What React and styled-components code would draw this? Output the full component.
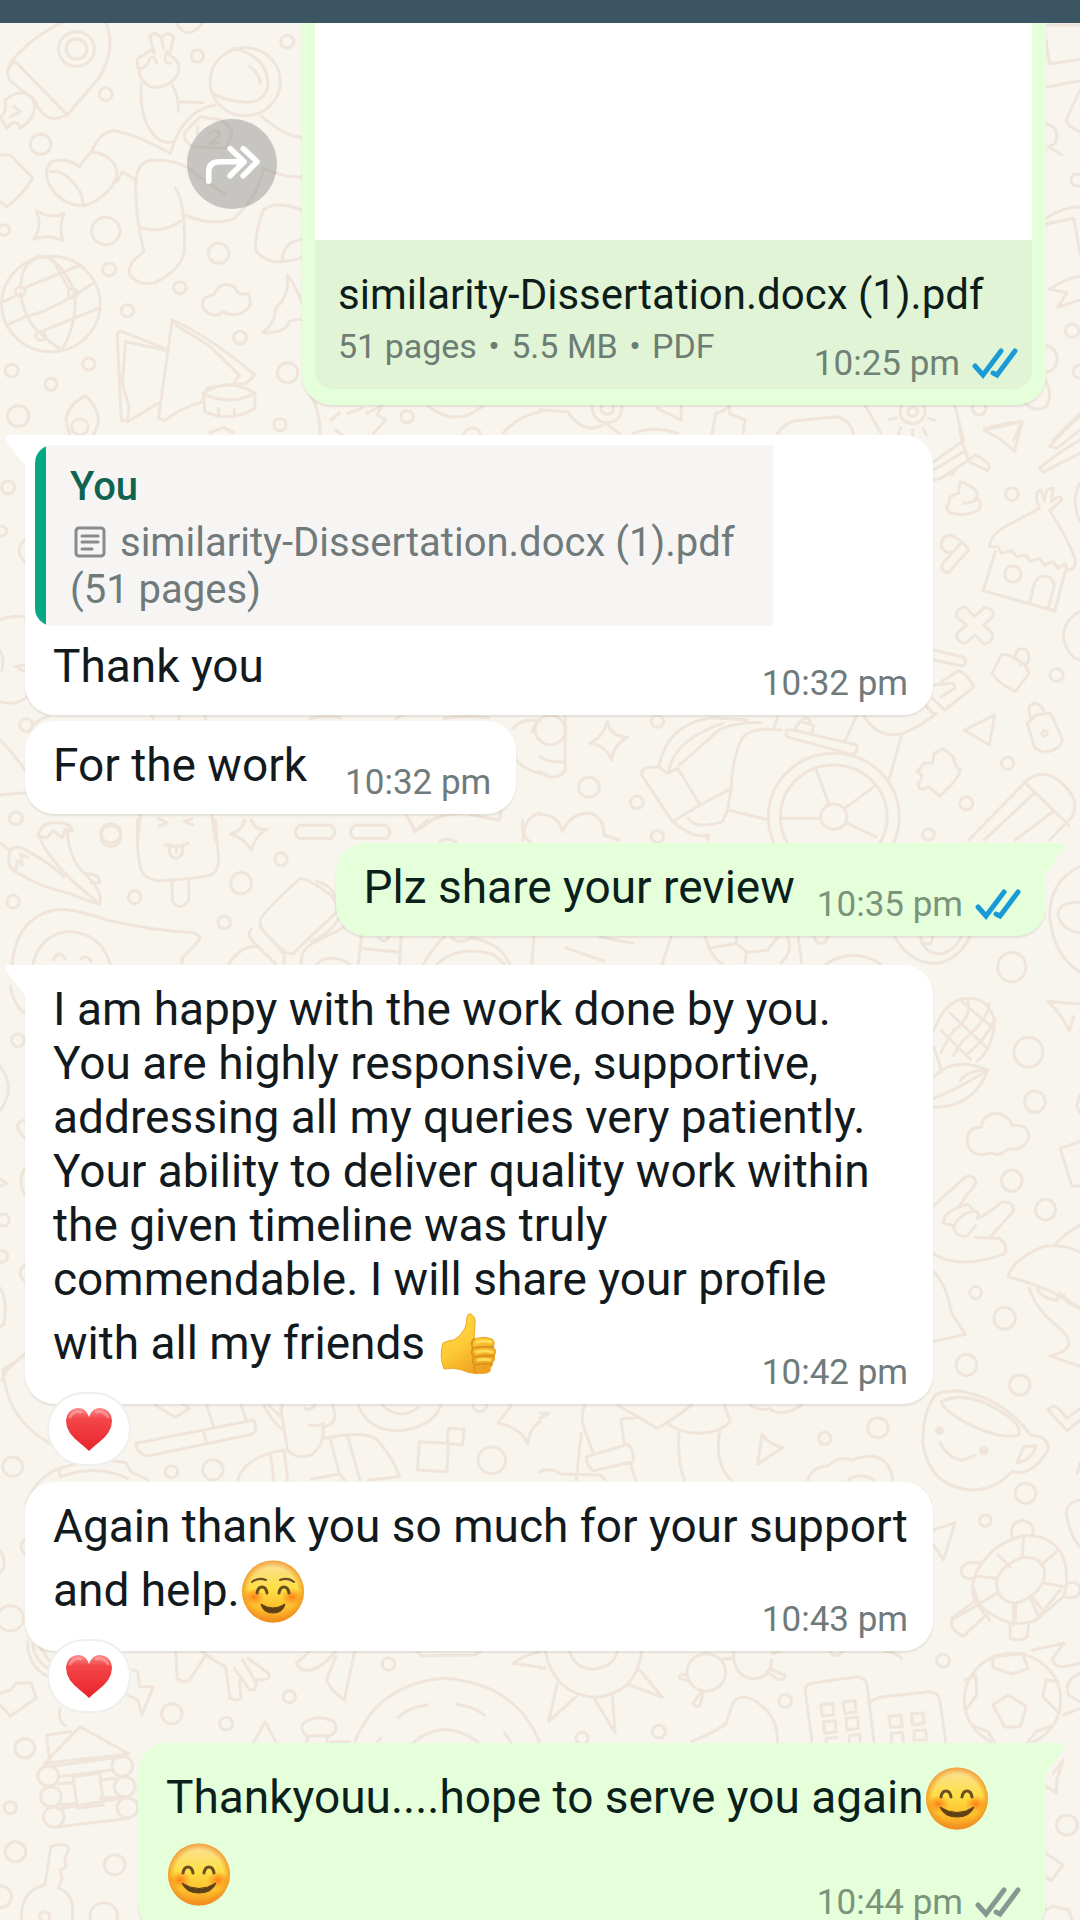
import React from "react";
import styled, { createGlobalStyle, css } from "styled-components";

const GlobalStyle = createGlobalStyle`
  *, *::before, *::after { box-sizing: border-box; }
  html, body { margin: 0; padding: 0; }
  body {
    background: #f8f5ee;
    font-family: Roboto, "Noto Sans", sans-serif;
    height: 100vh;
    overflow: hidden;
  }
`;

/* ---------- layout ---------- */

const Screen = styled.div`
  display: flex;
  flex-direction: column;
  height: 100vh;
  overflow: hidden;
`;

const StatusBar = styled.header`
  flex: none;
  height: 23px;
  background: #3b5662;
`;

const Chat = styled.main`
  position: relative;
  flex: 1;
  min-height: 0;
  overflow: hidden;
  background: #f8f5ee;
`;

const Wallpaper = styled.svg`
  position: absolute;
  inset: 0;
  width: 100%;
  height: 100%;
  fill: none;
  stroke: #efe5da;
  stroke-width: 3;
  stroke-linecap: round;
  stroke-linejoin: round;

  path, circle, rect { vector-effect: non-scaling-stroke; }
`;

const Thread = styled.ol`
  position: relative;
  display: flex;
  flex-direction: column;
  margin: 0;
  padding: 0 34px 0 25px;
  list-style: none;
`;

const Row = styled.li`
  display: flex;
  flex-direction: column;
  align-items: ${(p) => (p.$out ? "flex-end" : "flex-start")};
  margin-top: ${(p) => p.$gap || 0}px;
`;

const Forwardable = styled.div`
  display: flex;
  gap: 25px;
`;

/* ---------- bubbles ---------- */

const incomingTail = css`
  border-top-left-radius: 0;
  &::before {
    content: "";
    position: absolute;
    top: 0;
    left: -20px;
    width: 21px;
    height: 32px;
    background: inherit;
    clip-path: path("M21 0 H4 Q-2 1 2 7 L21 32 Z");
  }
`;

const outgoingTail = css`
  border-top-right-radius: 0;
  &::before {
    content: "";
    position: absolute;
    top: 0;
    right: -20px;
    width: 21px;
    height: 32px;
    background: inherit;
    clip-path: path("M0 0 H17 Q23 1 19 6 L0 32 Z");
  }
`;

const Bubble = styled.article`
  position: relative;
  width: ${(p) => (p.$wide ? "min(908px, 100%)" : "auto")};
  max-width: 100%;
  border-radius: 30px;
  background: ${(p) => (p.$out ? "#e5ffdb" : "#ffffff")};
  box-shadow: 0 2px 2px rgba(60, 50, 40, 0.1);
  ${(p) => p.$tail && (p.$out ? outgoingTail : incomingTail)}
`;

const Content = styled.div`
  display: ${(p) => (p.$inline ? "flex" : "grid")};
  gap: ${(p) => p.$gap || 0}px;
  padding: ${(p) => (p.$afterQuote ? 13 : 17)}px 22px 11px 28px;
`;

const Text = styled.p`
  grid-area: 1 / 1;
  margin: 0 0 11px;
  color: ${(p) => (p.$out ? "#0b1f1b" : "#121a1d")};
  font-size: 46px;
  line-height: 54px;
`;

const Meta = styled.div`
  grid-area: 1 / 1;
  align-self: end;
  justify-self: end;
  display: flex;
  align-items: center;
  gap: 12px;
  margin-right: 3px;
  color: ${(p) => (p.$out ? "#7a937b" : "#6f7a7b")};
  font-size: 35px;
  line-height: 40px;
  white-space: nowrap;
`;

const TickIcon = styled.svg`
  width: 46px;
  height: 32px;
  fill: none;
  stroke: ${(p) => (p.$read ? "#189bd6" : "#879892")};
  stroke-width: 5;
  stroke-linecap: round;
`;

/* ---------- document message ---------- */

const DocBubble = styled(Bubble)`
  width: 744px;
  padding: 0 14px 16px 13px;
  border-radius: 0 0 30px 30px;
`;

const Preview = styled.div`
  height: 217px;
  background: #ffffff;
`;

const DocFooter = styled.div`
  display: grid;
  padding: 30px 11px 5px 23px;
  border-radius: 0 0 18px 18px;
  background: #e1f5d6;

  ${Meta} { color: #6f8275; }
`;

const DocInfo = styled.div`
  grid-area: 1 / 1;
  padding-bottom: 16px;
`;

const DocTitle = styled.h2`
  margin: 0;
  color: #0d1d19;
  font-size: 42px;
  font-weight: 400;
  line-height: 50px;
`;

const DocFacts = styled.p`
  margin: 4px 0 0;
  color: #6c7d74;
  font-size: 34px;
  line-height: 44px;
`;

const Bullet = styled.span`
  margin: 0 3px;
`;

const ForwardButton = styled.button`
  display: grid;
  place-items: center;
  width: 90px;
  height: 90px;
  margin-top: 96px;
  padding: 0;
  border: 0;
  border-radius: 50%;
  background: rgba(130, 130, 130, 0.42);

  svg {
    width: 56px;
    height: 41px;
    fill: none;
    stroke: #ffffff;
    stroke-width: 6;
    stroke-linecap: round;
    stroke-linejoin: round;
  }
`;

/* ---------- quote ---------- */

const QuoteWrap = styled.div`
  padding: 10px 10px 0;
`;

const Quote = styled.blockquote`
  width: 738px;
  max-width: 100%;
  margin: 0;
  padding: 12px 24px 13px 35px;
  border-radius: 18px 0 0 18px;
  background: linear-gradient(to right, #05a884 11px, #f6f5f4 11px);
  color: #707a7b;
  font-size: 40px;
  line-height: 47px;
`;

const QuoteName = styled.strong`
  display: block;
  margin-bottom: 2px;
  color: #0f6350;
  font-size: 40px;
  font-weight: 500;
  line-height: 60px;
`;

const QuoteText = styled.p`
  margin: 0;
`;

const PageIcon = styled.svg`
  width: 32px;
  height: 32px;
  margin: 0 14px 0 4px;
  vertical-align: -2px;
  fill: none;
  stroke: #8b8b8b;
  stroke-width: 3;
  stroke-linecap: round;
`;

/* ---------- reactions and emoji ---------- */

const Reaction = styled.button`
  position: relative;
  display: grid;
  place-items: center;
  width: 84px;
  height: 74px;
  margin: -12px 0 0 22px;
  padding: 0;
  border: 2px solid #efefee;
  border-radius: 37px;
  background: #ffffff;

  svg {
    width: 48px;
    height: 45px;
  }
`;

const EmojiIcon = styled.svg`
  width: 64px;
  height: 76px;
  margin: 0 1px;
  vertical-align: -23px;
`;

/* ---------- drawings ---------- */

const GradientStore = styled.svg`
  display: block;
  width: 0;
  height: 0;
`;

function EmojiDefs() {
  return (
    <GradientStore aria-hidden="true">
      <defs>
        <linearGradient id="face" x1="0" y1="0" x2="0" y2="1">
          <stop offset="0" stopColor="#fbdf9d" />
          <stop offset="0.45" stopColor="#fde045" />
          <stop offset="0.75" stopColor="#fdc02d" />
          <stop offset="1" stopColor="#f5921f" />
        </linearGradient>
        <radialGradient id="rim" cx="0.5" cy="0.5" r="0.5">
          <stop offset="0.78" stopColor="#f08a1c" stopOpacity="0" />
          <stop offset="1" stopColor="#ee8a1e" stopOpacity="0.75" />
        </radialGradient>
        <radialGradient id="cheek" cx="0.5" cy="0.5" r="0.5">
          <stop offset="0" stopColor="#ff6a0e" stopOpacity="0.8" />
          <stop offset="1" stopColor="#ff7a10" stopOpacity="0" />
        </radialGradient>
        <linearGradient id="thumb" x1="0" y1="0" x2="0.6" y2="1">
          <stop offset="0" stopColor="#ffdc4a" />
          <stop offset="0.55" stopColor="#fccb35" />
          <stop offset="1" stopColor="#f0a01f" />
        </linearGradient>
        <linearGradient id="heart" x1="0" y1="0" x2="0" y2="1">
          <stop offset="0" stopColor="#f98a88" />
          <stop offset="0.25" stopColor="#f3474a" />
          <stop offset="1" stopColor="#e8232b" />
        </linearGradient>
      </defs>
    </GradientStore>
  );
}

function Smile({ brows }) {
  return (
    <EmojiIcon viewBox="0 0 64 76" role="img" aria-label="smiling face">
      <circle cx="32" cy="38.500" r="31" fill="url(#face)" />
      <circle cx="32" cy="38.500" r="31" fill="url(#rim)" />
      <ellipse cx="13" cy="44" rx="11" ry="9" fill="url(#cheek)" />
      <ellipse cx="51" cy="44" rx="11" ry="9" fill="url(#cheek)" />
      {brows ? (
        <>
          <g fill="none" stroke="#6a4e22" strokeLinecap="round">
            <path d="M16 40 Q17 34 21 34 Q25 34 26 40 M38 40 Q39 34 43 34 Q47 34 48 40" strokeWidth="3" />
            <path d="M11 29 Q17 24 25 27 M39 27 Q47 24 53 29" strokeWidth="2" />
          </g>
          <path d="M20 51 Q32 59 44 51 Q42 60 32 60 Q22 60 20 51Z" fill="#5d4016" stroke="#5d4016" strokeLinejoin="round" />
        </>
      ) : (
        <>
          <path
            d="M16 37 Q17 31 21 31 Q25 31 26 37 M37 37 Q38 31 42 31 Q46 31 47 37"
            fill="none" stroke="#6a4e22" strokeLinecap="round" strokeWidth="3"
          />
          <path d="M15 47 Q32 58 49 47 Q45 57 32 57 Q19 57 15 47Z" fill="#5d4016" stroke="#5d4016" strokeLinejoin="round" />
        </>
      )}
    </EmojiIcon>
  );
}

function ThumbsUp() {
  return (
    <EmojiIcon viewBox="0 0 64 76" role="img" aria-label="thumbs up">
      <path
        d="M5 37 Q11 34 16 34 Q24 29 27 22 Q29 17 29 11 Q30 7 33 8 Q38 11 37 18 L36 33 L40 32 Q47 30 54 33 Q58 36 55 41 Q60 45 56 50 Q58 54 54 57 Q55 60 52 62 Q54 66 48 67 Q34 69 24 64 Q15 61 6 63 Q1 50 5 37Z"
        fill="url(#thumb)" stroke="#eda628" strokeWidth="1"
      />
      <path
        d="M36 33 Q32 37 35 42 Q32 47 36 51 Q33 55 37 59 Q35 63 38 67 M35 42 Q46 40 55 41 M36 51 Q47 49 56 50 M37 59 Q47 57 54 58"
        fill="none" stroke="#dc9420" strokeWidth="2" strokeLinecap="round"
      />
      <path d="M39 36 Q46 34 53 36 M39 46 Q47 44 54 46 M40 54 Q46 53 52 54" fill="none" stroke="#ffdc55" strokeWidth="3" strokeLinecap="round" />
    </EmojiIcon>
  );
}

function Heart() {
  return (
    <svg viewBox="0 0 48 45" aria-hidden="true">
      <path
        d="M24 44 Q21 41 16 37 Q1 26 1 14 Q2 2 13 1 Q21 1 24 10 Q27 1 35 1 Q46 2 47 14 Q47 26 32 37 Q27 41 24 44Z"
        fill="url(#heart)"
      />
      <path d="M5 10 Q9 3 16 5 M31 5 Q39 3 43 10" fill="none" stroke="#ffc4c2" strokeOpacity="0.45" strokeWidth="3" strokeLinecap="round" />
    </svg>
  );
}

function Ticks({ read }) {
  return (
    <TickIcon viewBox="0 0 46 32" $read={read} role="img" aria-label={read ? "Read" : "Delivered"}>
      <path d="M3 18 L11 27 L29 3 M21 25 L25 27 L43 3" />
    </TickIcon>
  );
}

/* Each patch is a group of doodles: origin, vertical scale, small rings and outlines. */
const X_SCALE = 540 / 1568;
const patches = [
  {
    x: 0, y: 0, sy: 1 / 3,
    rings: [
      [222, 147, 52], [222, 147, 30], [307, 282, 19], [573, 168, 18], [834, 125, 19], [118, 433, 30],
      [307, 693, 41], [635, 760, 30], [12, 690, 16], [317, 808, 19], [522, 863, 18], [370, 932, 18],
      [697, 1013, 19], [835, 1118, 30], [258, 1092, 18], [148, 1153, 18], [34, 1112, 19], [53, 1248, 31],
      [813, 1274, 18], [1182, 1250, 18], [712, 245, 102], [148, 912, 143], [59, 874, 14], [212, 880, 14],
      [118, 1007, 14], [232, 1280, 24], [1372, 1310, 26],
    ],
    paths: [
      "M28 190 Q90 110 190 62 M305 62 Q340 140 290 230 L195 345 M45 185 L195 345 M45 185 Q10 205 28 240 Q60 270 100 300 Q130 370 175 352 L195 345",
      "M15 300 Q60 260 95 295 Q115 345 60 385 Q45 350 20 385 L0 350 Q20 345 15 300 M40 320 L60 335 L30 350",
      "M510 66 Q545 130 590 66 M435 110 Q450 88 468 115 L475 145 M468 115 Q485 90 505 110 L492 165 Q530 185 515 225 Q490 265 440 262 Q400 240 405 205 Q385 175 420 165 Q440 140 448 160 L435 110 M400 205 Q425 210 435 175 Q450 165 455 190 M485 155 Q470 190 495 190",
      "M410 250 Q405 350 440 395 Q465 435 500 425 M500 255 Q520 290 518 335 M520 305 L590 308 M680 145 Q780 170 778 260 Q765 315 700 305 Q640 300 615 275 M725 200 Q750 215 757 250",
      "M495 460 Q530 330 625 315 M760 350 Q830 410 875 412 M495 460 Q390 400 330 392 Q290 395 265 455 L230 500 Q190 470 150 485 Q115 520 160 580 Q210 630 260 612 Q340 570 340 510 Q320 460 265 455 M145 515 Q190 505 235 580 L243 618 M340 545 L355 515 L395 540",
      "M560 515 Q520 480 450 480 Q400 480 395 540 Q390 640 418 755 Q370 790 375 820 Q400 860 450 848 Q540 800 535 740 Q540 620 510 565 M408 682 Q470 705 530 660 M560 515 L655 585 M535 645 Q620 680 680 655 Q750 590 765 505 Q830 535 875 530",
      "M580 350 L640 360 Q680 380 672 410 L655 445 L560 440 Q530 420 535 400 Z M575 380 L572 400 M610 400 Q640 380 635 410 L610 430 H635",
      "M875 630 Q800 600 765 630 Q740 700 742 750 Q770 790 820 785 Q870 780 875 770 M875 720 Q820 725 820 785",
      "M0 465 L30 465 L95 535 Q60 590 20 620 L0 605 M105 632 Q150 660 185 640 Q170 680 182 722 Q140 700 98 718 Q125 680 105 632Z",
      "M60 865 Q60 790 115 768 Q170 770 215 870 Q230 960 180 1050 M60 880 Q70 960 118 1000 Q160 1040 180 1050 M10 905 L50 885 M75 862 Q150 830 235 795 M70 950 Q140 940 270 850 M20 975 L75 950 M130 990 L285 925 M200 868 Q160 790 145 768",
      "M590 925 Q580 890 620 885 Q640 840 680 860 Q690 890 720 880 Q740 920 700 940 Q670 950 650 935 Q620 960 590 925Z",
      "M835 825 Q865 870 875 905 M835 825 Q840 890 800 925 Q800 970 762 998 Q830 1000 840 965 Q870 955 875 960",
      "M340 1000 L350 993 L478 1045 M340 1000 L352 1260 L370 1265 L460 1210 M365 1025 L478 1050 M365 1025 L355 1150 L375 1220 L370 1265 M500 960 L460 1255 L478 1262 Q530 1220 590 1205 M500 960 Q610 1010 740 1125 L715 1150 Q650 1155 600 1165 M510 975 L605 1035 L695 1125 L680 1150",
      "M590 1180 Q665 1130 740 1180 V1225 Q665 1270 595 1235 Z M590 1180 Q665 1220 740 1180 M635 1225 V1245 M680 1228 V1245",
      "M250 1188 Q200 1210 192 1255 Q195 1300 215 1320 M250 1188 Q300 1240 280 1285 Q270 1310 260 1320",
      "M900 1180 Q930 1230 930 1310 M960 1260 L985 1240 M1010 1240 L1050 1225 M1065 1240 L1110 1215 L1095 1245 L1120 1260 L1085 1300 M975 1290 L1000 1310 M1240 1215 Q1320 1285 1400 1220 M1460 1300 Q1500 1250 1568 1235",
    ],
  },
  {
    x: 540, y: 0, sy: 1 / 3,
    rings: [[1560, 540, 18], [1545, 992, 20], [1568, 1115, 20], [1275, 1225, 20], [1082, 1235, 36], [1082, 1235, 14], [195, 1225, 43], [195, 1225, 18]],
    paths: [
      "M1469 75 H1568 M1469 120 L1480 192 L1568 178 M1469 262 L1568 242 M1568 270 L1528 360 Q1530 380 1568 395 M1469 370 Q1505 380 1500 420 Q1490 440 1475 440 L1515 465",
      "M1469 655 Q1520 620 1568 620 M1469 672 L1550 655 M1550 655 Q1560 720 1568 760 M1480 868 Q1530 830 1568 830 M1480 868 L1530 878 L1503 922 L1568 900 M1469 1035 Q1510 1050 1500 1090 Q1490 1115 1469 1118",
      "M1469 1140 Q1490 1190 1470 1220 Q1440 1240 1410 1210 M0 1230 L80 1235 Q130 1310 190 1270 L230 1300 M340 1225 L410 1260 V1215 M510 1240 Q545 1230 550 1215 M510 1240 L500 1300 M550 1215 V1240 L595 1260 L590 1300 M690 1300 Q710 1270 740 1262 L860 1250 Q900 1260 910 1300 M270 1300 Q330 1275 400 1300",
      "M945 1218 L990 1300 M1205 1218 L1230 1320 M1290 1285 Q1350 1270 1400 1265 L1375 1320 M1490 1320 L1568 1240 M1015 1258 L1035 1255 M1048 1282 L1040 1305 M1082 1290 V1310 M1112 1285 L1122 1305 M1128 1255 L1145 1260",
    ],
  },
  {
    x: 0, y: 420, sy: 1 / 3,
    rings: [[24, 202, 19], [4, 333, 15], [76, 915, 19], [46, 1195, 19], [322, 1240, 29]],
    paths: [
      "M610 38 L650 22 L678 38 M72 360 Q40 390 72 425 M0 600 Q35 585 73 590 M0 845 Q45 860 80 830 M0 690 Q15 720 5 750 M45 740 L73 735 M73 752 L55 748",
      "M0 960 Q40 1000 73 1050 M0 1125 L73 1118 M85 935 Q100 900 140 890 M440 885 L445 895 M520 885 V897 M595 885 L597 897 M900 895 Q950 885 990 893 M1150 895 L1170 885 M1290 895 Q1350 885 1420 893",
      "M1490 925 Q1520 890 1568 905 M1490 1010 Q1520 1050 1568 1060 M1455 1170 L1450 1200 L1365 1185 M1180 1185 L1205 1235 L1255 1200 Q1290 1180 1350 1180 M1568 1180 Q1520 1190 1518 1260 M1560 900 L1545 935",
      "M408 1183 L400 1260 M615 1183 L625 1260 M460 1195 L485 1208 L462 1218 M558 1195 L535 1205 L560 1215",
    ],
  },
  {
    x: 540, y: 420, sy: 1 / 3,
    rings: [
      [1370, 222, 19], [1373, 462, 24], [1500, 765, 19], [1358, 1030, 18], [1238, 1150, 19], [1128, 1243, 17],
      [341, 904, 18], [142, 1102, 30], [281, 1147, 19], [341, 1250, 18], [853, 1190, 38], [853, 1190, 155],
      [853, 1190, 190], [30, 930, 44], [1465, 940, 8],
    ],
    paths: [
      "M1143 125 L1225 65 L1215 0 M1225 65 L1245 120 L1165 175 L1143 180 M1143 150 L1230 95 M1245 120 L1265 105 Q1300 125 1305 140 L1300 152 L1245 125 M1195 165 L1210 145 M1290 30 L1400 5 L1378 95 L1340 60 Z M1480 80 Q1530 20 1568 -10 M1480 80 L1500 85 L1568 30 M1450 145 Q1500 100 1568 60 M1450 145 L1460 157 L1568 100",
      "M1220 185 Q1215 215 1215 220 Q1180 230 1190 245 Q1170 270 1195 280 Q1240 290 1275 270 Q1285 240 1265 235 Q1285 210 1220 185Z M1230 250 Q1250 250 1265 240",
      "M1450 265 Q1430 215 1455 210 L1465 245 Q1465 200 1490 205 L1485 245 Q1510 220 1515 240 L1480 272 Q1530 350 1555 420 Q1555 450 1530 450 L1525 430 L1505 445 L1490 425 L1465 435 L1450 415 L1425 425 L1410 405 L1385 410 L1370 392 L1340 400 L1330 380 L1305 380 Q1310 340 1360 315 Z M1322 395 L1287 512 L1495 573 L1525 455 M1422 550 L1435 490 Q1450 460 1480 472 Q1500 490 1490 510 L1475 567",
      "M1165 380 Q1165 340 1200 348 L1230 370 L1245 390 L1185 458 Q1160 455 1170 430 L1222 370 M1165 380 Q1180 405 1195 395 M1568 190 Q1540 240 1568 305 M1568 575 Q1520 600 1520 650 Q1530 710 1568 720",
      "M1235 560 L1262 590 L1290 562 Q1320 565 1315 590 L1288 615 L1315 640 Q1315 670 1290 672 L1262 645 L1235 670 Q1205 665 1210 640 L1238 615 L1210 590 Q1205 565 1235 560Z",
      "M1143 690 L1225 710 Q1245 720 1228 738 L1143 720 M1143 795 L1200 790 L1205 805 L1165 830 M1165 785 L1215 752 Q1240 760 1260 800 L1175 870 L1140 835 M1110 845 L1145 885",
      "M1340 705 Q1355 700 1380 715 Q1380 680 1410 688 Q1425 705 1415 730 L1395 735 M1340 705 L1312 760 Q1330 790 1380 815 L1420 760 Q1415 735 1380 715",
      "M1425 895 Q1410 850 1440 850 Q1460 855 1465 880 M1415 910 L1440 885 L1480 880 Q1490 890 1517 960 Q1510 990 1465 997 Q1440 990 1435 980 Z M1320 885 L1232 930 L1305 975 Z",
      "M1095 1055 L1115 1030 L1140 1030 L1145 1000 L1170 985 L1200 1010 Q1205 1040 1220 1050 Q1215 1080 1160 1128 L1130 1100 Q1100 1120 1098 1090 Q1120 1065 1095 1055Z",
      "M195 905 Q205 950 255 952 Q215 970 208 1020 Q190 975 145 970 Q185 950 195 905Z M73 885 V1050 Q60 1075 25 1070 L0 1055 M0 1010 Q30 1030 73 1025",
      "M345 1040 Q370 910 500 893 L600 900 M375 1050 Q390 960 530 910 M405 1035 L520 930 Q570 905 640 908 M345 1040 Q290 1040 295 1065 L385 1205 L465 1155 L400 1045 L370 1060 L345 1040 M465 1155 L555 1105 Q560 1000 590 950 Q620 920 700 930 M555 1105 L545 1170 L530 1205 Q450 1230 430 1195 M545 1170 L665 1200 M385 1205 Q450 1260 490 1245 L485 1260 M690 890 L680 920",
      "M715 930 L735 930 L920 975 Q925 1000 905 1003 L715 950 Z M740 925 L755 905 L795 915 L790 935 M760 900 Q775 885 785 905 M885 965 L920 885 M940 885 Q980 960 1055 940 Q1120 910 1150 880 M1050 945 L1015 1075",
      "M800 1045 L840 1155 M970 1100 L885 1165 M700 1195 H815 M892 1210 L975 1250 M0 1185 Q50 1180 65 1235 Q90 1175 150 1180 Q190 1200 185 1245 M185 1245 L230 1260",
      "M1245 1260 L1415 1080 Q1470 1040 1520 1095 Q1570 1140 1545 1190 L1480 1260 M1405 1085 L1535 1215 M1290 1260 L1435 1120 M1380 1260 L1490 1175",
    ],
  },
  {
    x: 0, y: 820, sy: 1 / 2.8,
    rings: [
      [322, 45, 29], [816, 110, 18], [700, 177, 30], [391, 216, 18], [38, 229, 18], [651, 287, 18],
      [52, 617, 18], [10, 1120, 17], [6, 1222, 16],
    ],
    paths: [
      "M400 0 Q395 90 410 140 Q420 165 460 170 Q560 165 610 155 Q635 145 635 110 L625 0 M500 170 V225 Q520 260 548 225 V165 M480 68 Q515 80 548 65 M490 72 Q490 105 512 108 Q535 100 530 72 M512 90 V78",
      "M110 45 Q120 5 160 8 Q205 5 210 30 L190 25 L180 50 L155 30 L135 50 L110 45 M115 50 Q150 130 290 235 M195 30 Q200 110 245 150 Q300 200 290 235 M245 150 Q290 150 290 175 L265 175 M0 65 L30 85 Q50 65 85 90 Q160 130 185 160 M30 85 Q15 130 45 145 Q120 190 200 205 Q260 230 290 235 M45 145 L50 115 L65 125 L60 95 L80 105",
      "M730 0 Q740 30 775 25 Q740 45 730 85 Q710 50 668 40 Q705 30 710 0 M870 15 H960 Q985 35 960 52 H870 Q845 35 870 15Z M1030 15 H1120 Q1145 35 1120 52 H1030 Q1005 35 1030 15Z M1190 0 L1205 32 L1240 0 M1518 0 Q1510 40 1540 62 M1275 62 Q1300 45 1325 62",
      "M35 405 Q50 260 180 250 Q240 255 310 280 Q440 310 560 315 Q590 325 575 340 L530 385 L528 403 M95 403 Q120 315 205 312 Q295 320 320 403 M155 392 Q170 360 190 390 M235 390 Q250 375 265 395",
      "M755 285 Q750 270 870 165 Q890 160 960 210 Q985 240 975 260 L850 375 Q830 380 760 305 Z M730 305 Q715 320 730 335 L800 403 M755 300 L825 375 L825 403 M920 172 Q965 185 972 215 M985 270 Q970 310 905 340 M665 403 Q700 350 745 355 M875 403 Q870 360 920 340 Q980 310 1000 300 M920 403 Q960 370 1015 403",
      "M1040 403 L1050 325 M1160 403 L1165 325 M1055 360 L1160 370 M1100 330 Q1120 350 1130 325 M1230 403 Q1270 340 1290 328 M1270 403 Q1330 350 1430 375 L1465 403 M1310 330 Q1340 350 1365 330 M1365 330 Q1450 340 1480 403 M1545 403 L1550 330",
      "M30 465 Q40 520 70 540 M0 690 Q40 740 15 790 Q5 810 0 812 M72 840 Q30 850 72 890 M0 1005 L20 1018 L0 1025 M72 975 Q50 1010 72 1050 M72 1245 Q45 1270 72 1290 M0 1310 Q25 1350 10 1415 L0 1418 M72 1495 L20 1540 L5 1568",
    ],
  },
  {
    x: 540, y: 820, sy: 1 / 2.8,
    rings: [
      [1370, 412, 41], [1418, 650, 42], [1437, 789, 30], [1370, 1010, 30], [1468, 1091, 29], [1265, 1323, 17],
      [1349, 1395, 31], [1238, 1526, 30], [816, 325, 20],
    ],
    paths: [
      "M1568 130 Q1480 170 1480 270 Q1490 380 1568 425 M1568 230 Q1500 230 1505 270 Q1520 310 1568 315 M1030 325 Q1070 400 1150 402 Q1220 390 1248 325 M1105 325 Q1110 370 1160 375 Q1210 365 1222 325 M1120 345 Q1140 355 1140 325",
      "M480 328 Q500 390 530 403 M490 360 L570 345 L600 370 L660 365 L690 330 M600 370 L595 400 M720 328 Q735 370 700 400 M570 328 V345 M750 330 L760 400 M380 328 L355 403 M75 358 L185 395 M175 328 L270 345 M830 403 Q910 355 990 403",
      "M1143 590 Q1180 500 1240 500 Q1300 495 1320 560 Q1315 640 1270 675 M1190 540 L1300 640 M1225 508 L1318 585 M1165 590 L1250 670 M1240 500 Q1260 550 1200 590 Q1180 620 1165 650 M1305 515 Q1300 560 1225 620 L1200 660 M1320 560 Q1290 620 1240 655 M1143 635 Q1160 680 1165 705 M1143 720 Q1200 660 1300 700 Q1270 780 1190 800 L1143 805 M1143 780 Q1220 750 1300 700 M1300 700 Q1240 700 1220 730",
      "M1475 508 L1568 515 M1475 508 Q1520 550 1537 592 L1550 550 M1568 770 L1558 800 L1568 820 M1240 900 Q1240 860 1280 860 Q1290 820 1330 822 Q1365 830 1370 855 Q1420 850 1420 890 Q1400 930 1360 920 Q1335 945 1310 932 Q1250 950 1240 900Z M1568 900 L1510 920 L1545 1025 H1568",
      "M1143 1080 L1235 1000 Q1265 990 1265 1020 Q1230 1060 1215 1085 Q1170 1100 1172 1130 L1200 1135 Q1205 1170 1240 1165 L1265 1135 M1215 1085 Q1250 1065 1255 1095 Q1210 1110 1205 1135 M1255 1095 Q1280 1095 1270 1115 Q1290 1110 1340 1070 Q1375 1065 1375 1095 L1310 1165 M1265 1168 L1335 1172 Q1360 1190 1350 1215 Q1220 1260 1143 1215",
      "M1568 1135 Q1520 1160 1495 1190 M1568 1210 Q1520 1185 1460 1195 Q1370 1230 1360 1280 Q1460 1300 1568 1365 M1420 1310 Q1440 1370 1500 1415 Q1580 1480 1480 1500 L1568 1530 M1445 1310 Q1450 1335 1500 1345 L1510 1325 M1520 1330 L1530 1350 L1568 1370",
      "M1143 1265 Q1180 1300 1195 1380 L1235 1440 L1143 1460",
    ],
  },
  {
    x: 0, y: 1280, sy: 1 / 3,
    rings: [[37, 560, 29], [498, 575, 18], [618, 569, 30], [1428, 541, 40], [1393, 375, 20]],
    paths: [
      "M72 225 L8 270 Q20 420 145 490 M450 375 L510 412 L550 385 L530 372 M600 375 L620 440 M700 375 L715 420 M395 490 L590 450 L735 420 Q750 440 735 462 L430 528 Q395 520 395 490 M590 450 L600 490",
      "M765 375 Q800 440 825 450 M780 375 L815 410 L820 375 M815 385 L835 510 Q860 540 905 525 Q945 490 938 440 Q990 430 965 375 M885 385 Q900 395 915 375 M900 435 Q930 440 938 430 M690 600 Q710 530 825 510 L835 600 M785 520 L795 600 M940 475 Q1060 450 1095 480 Q1140 530 1160 590 L1070 600 M960 480 L985 580 L1000 600 M1010 470 L1045 600 M905 597 L985 582",
      "M1040 375 Q1070 455 1160 452 Q1260 440 1280 375 M1110 375 Q1160 425 1215 382 M1218 485 L1302 490 L1298 575 L1212 570 Z M1302 445 L1348 447 L1342 495 L1298 490 Z M1485 375 L1445 430 Q1510 440 1532 492 Q1540 440 1568 425",
      "M75 670 Q110 580 190 560 Q280 530 365 548 L380 575 L430 600 M175 590 L170 570 M175 590 Q280 550 370 595 M72 780 Q50 800 72 820 M0 810 Q25 850 0 880",
    ],
  },
  {
    x: 540, y: 1300, sy: 1 / 3,
    rings: [[981, 383, 30], [827, 415, 18], [1410, 580, 30], [1293, 662, 17], [1393, 255, 30]],
    dots: [[1160, 392, 9], [1289, 452, 10]],
    paths: [
      "M130 315 Q115 350 130 390 L155 460 M120 400 L105 540 M225 315 L340 385 Q400 350 440 315 M290 352 L235 358 L245 435 M135 470 L255 433 Q275 450 270 485 L155 512 Q135 500 135 470 M262 490 L278 540 M535 315 L553 365 Q520 400 455 400 Q400 395 370 370 M403 400 Q400 500 420 540 M522 392 Q505 490 555 540 M0 515 Q30 500 60 522 L175 525 L190 540",
      "M610 315 Q640 335 665 325 Q700 355 760 315 M0 340 L25 340 L0 355 M645 403 Q660 430 705 443 L632 492 Z M778 540 Q790 500 835 498 Q870 465 905 480 Q1010 440 1025 540 M895 540 Q925 515 970 540",
      "M1145 290 Q1150 275 1210 272 Q1340 290 1425 405 Q1480 410 1475 450 Q1430 530 1370 515 Q1320 570 1250 570 Q1130 560 1112 430 Q1110 340 1145 290 M1165 305 Q1240 270 1330 330 Q1400 370 1390 405 Q1340 420 1240 370 Q1170 330 1165 305 M1162 430 Q1190 480 1230 480 L1262 465 M1405 440 L1440 437 Q1430 480 1385 488 Z",
      "M1475 330 Q1490 310 1505 325 L1530 355 L1568 325 M1475 330 L1530 392 L1568 360 M1568 600 Q1520 610 1530 650 Q1540 710 1568 740 M1568 490 L1560 520 M1143 690 L1205 668 L1172 780 L1143 735 M1110 568 L1135 605",
      "M1372 715 Q1360 670 1400 660 Q1440 670 1430 705 M1265 820 Q1310 730 1400 708 Q1500 700 1525 790 Q1535 850 1520 890 L1440 960 M1265 820 Q1245 870 1270 915 L1305 960 M1280 790 Q1225 780 1222 815 Q1230 840 1258 835 M1530 850 Q1570 840 1568 875 Q1560 900 1520 890 M1325 850 Q1330 800 1400 772 Q1470 770 1465 830 Q1450 890 1380 910 Q1330 905 1325 850 M1405 708 L1400 772 M1500 755 L1455 795 M1330 765 L1365 800 M1265 828 L1325 835 M1465 850 L1520 860 M1425 885 L1455 925 M1382 910 L1380 960 M1325 880 L1270 915 L1195 960",
    ],
  },
  {
    x: 0, y: 1580, sy: 1 / 3,
    rings: [
      [30, 115, 38], [1128, 252, 18], [840, 350, 18], [499, 401, 30], [657, 431, 19], [72, 505, 29], [30, 683, 18],
      [45, 815, 30], [333, 854, 30], [0, 950, 33], [301, 1008, 40], [130, 1010, 15], [140, 588, 30], [355, 558, 30],
      [148, 650, 30], [362, 620, 30], [156, 711, 30], [370, 683, 30],
    ],
    paths: [
      "M80 185 Q80 260 140 290 M95 195 Q100 240 145 270 M115 200 L145 245 M510 213 L515 295 Q530 310 550 300 L595 230 M585 213 Q615 240 655 260 L668 355 Q690 365 700 355 L695 300 M680 265 L725 330 L740 328 L745 310 L705 240 M720 235 L780 280 Q790 300 745 300",
      "M900 213 L860 250 Q870 275 905 270 Q940 260 975 213 M1030 213 L1000 360 Q960 330 948 300 L975 230 M1210 213 L1225 228 L1380 225 L1395 213 M1490 250 Q1520 225 1568 215 M1490 250 L1568 262",
      "M0 340 L30 330 L45 310 L90 308 L105 355 L30 408 L0 375 M385 270 L400 275 L405 320 L445 320 L412 405 L400 360 L370 345 M175 385 Q165 420 190 438",
      "M135 465 L205 455 M135 465 L145 545 M232 440 L130 550 L375 522 Z M140 560 L355 530 M170 590 L325 570 M170 612 L212 608 M290 600 L335 595 M175 675 L220 670 M290 655 L345 652 M160 742 L375 715 M180 685 L350 655 M212 590 L290 580 L300 675 L225 685 Z",
      "M148 800 Q185 785 200 805 L188 835 L192 860 L175 870 L180 895 L170 925 Q220 940 210 1020 M148 800 L130 915 Q60 930 62 1020 M735 490 L770 425 L803 490 M880 430 Q920 400 970 425 Q985 460 955 468 H890 Q870 450 880 430 M895 468 L890 488 M950 468 V485",
      "M1030 485 Q1100 310 1290 295 Q1500 310 1568 490 M1155 412 Q1190 380 1242 374 M1325 373 Q1375 380 1408 406 M1200 488 Q1290 410 1390 488 M1465 458 L1485 490 M1095 488 L1105 475 M960 485 H1015",
    ],
  },
  {
    x: 540, y: 1580, sy: 1 / 3,
    rings: [[483, 277, 56], [345, 455, 19], [712, 363, 19], [122, 475, 18], [1170, 242, 19], [1372, 360, 140], [1530, 735, 30]],
    paths: [
      "M15 213 Q40 340 155 352 Q280 345 295 213 M85 213 Q100 265 155 268 Q215 260 225 213 M50 310 L25 425 L105 350 M155 352 L218 458 L210 345 M260 315 L355 352 L285 265 M0 265 L15 265",
      "M562 213 Q560 290 620 297 Q675 290 672 240 M530 238 L560 235 M675 220 L697 215 M660 275 L690 298 Q715 300 710 285 L672 268 M427 285 Q400 280 405 295 L428 302 M470 332 L445 370 Q450 385 465 375 L475 335",
      "M440 485 Q520 450 540 430 L560 370 Q580 340 620 360 Q690 400 690 485 M790 485 L770 330 Q770 310 800 308 L920 290 Q950 295 950 320 L970 485 M955 375 Q960 355 1000 350 L1130 335 Q1160 335 1162 370 L1178 485",
      "M815 375 L850 370 L853 405 L820 408Z M880 365 L915 362 L918 395 L885 400Z M822 425 L857 422 L860 455 L827 460Z M888 415 L922 412 L925 445 L892 450Z M830 485 L832 475 L862 472 M898 485 V468 L928 463 L930 485 M1012 410 L1048 405 L1052 440 L1018 442Z M1078 402 L1112 398 L1115 430 L1082 435Z M1020 485 V460 L1052 457 L1055 485 M1085 480 L1088 452 L1120 450 L1122 480Z",
      "M1315 375 L1360 345 L1412 378 L1395 440 L1350 442 Z M1315 232 L1400 220 L1418 265 L1370 282 L1315 262 Z M1235 300 L1265 285 L1268 345 L1240 385 M1505 305 L1470 300 L1460 350 L1508 400 M1255 435 L1300 455 L1320 488 M1415 488 L1440 455 L1490 435 M1430 210 L1522 190 L1488 235 Q1490 260 1520 260 L1568 250 M1568 280 Q1520 300 1535 345 L1568 365 M1520 405 L1568 385",
      "M1490 580 L1520 540 L1500 600 V638 L1470 620 M1469 820 L1518 855 L1485 902 L1469 890 M1469 990 L1490 978 L1535 990 L1545 1020",
      "M840 213 Q860 240 880 213 M1000 213 Q1030 215 1050 235 M1260 65 L1195 115 Q1190 155 1230 168 L1300 100 M1510 30 L1440 120 Q1370 150 1300 95 Q1265 70 1262 30 M1375 68 V135 M1425 55 L1445 105 M1365 135 L1365 175 Q1395 185 1415 170 L1420 125",
    ],
  },
];

function Doodles() {
  return (
    <Wallpaper viewBox="0 23 1080 1897" preserveAspectRatio="xMidYMin slice" aria-hidden="true">
      {patches.map((p) => (
        <g key={`${p.x}-${p.y}`} transform={`translate(${p.x} ${p.y}) scale(${X_SCALE} ${p.sy})`}>
          {p.rings.map(([cx, cy, r], i) => (
            <circle key={i} cx={cx} cy={cy} r={r} />
          ))}
          {(p.dots || []).map(([cx, cy, r], i) => (
            <circle key={i} cx={cx} cy={cy} r={r} fill="#efe5da" />
          ))}
          {p.paths.map((d, i) => (
            <path key={i} d={d} />
          ))}
        </g>
      ))}
    </Wallpaper>
  );
}

/* ---------- messages ---------- */

function Stamp({ time, out, read }) {
  return (
    <Meta $out={out}>
      <time>{time}</time>
      {out && <Ticks read={read} />}
    </Meta>
  );
}

function Message({ out, tail, wide, gap, inlineGap, quote, time, read, reaction, children }) {
  return (
    <Row $out={out} $gap={gap}>
      <Bubble $out={out} $tail={tail} $wide={wide}>
        {quote && <QuoteWrap>{quote}</QuoteWrap>}
        <Content $inline={!wide} $gap={inlineGap} $afterQuote={Boolean(quote)}>
          <Text $out={out}>{children}</Text>
          <Stamp time={time} out={out} read={read} />
        </Content>
      </Bubble>
      {reaction && (
        <Reaction type="button" aria-label="Heart reaction">
          <Heart />
        </Reaction>
      )}
    </Row>
  );
}

export default function App() {
  return (
    <Screen>
      <GlobalStyle />
      <EmojiDefs />
      <StatusBar />
      <Chat>
        <Doodles />
        <Thread>
          <Row $out>
            <Forwardable>
              <ForwardButton type="button" aria-label="Forward">
                <svg viewBox="0 0 60 44">
                  <path d="M5 40 V30 Q5 19 17 19 H42 M28 5 L43 19 L28 34 M42 5 L57 19 L42 34" />
                </svg>
              </ForwardButton>
              <DocBubble $out>
                <Preview />
                <DocFooter>
                  <DocInfo>
                    <DocTitle>similarity-Dissertation.docx (1).pdf</DocTitle>
                    <DocFacts>
                      51 pages <Bullet>•</Bullet> 5.5 MB <Bullet>•</Bullet> PDF
                    </DocFacts>
                  </DocInfo>
                  <Stamp time="10:25 pm" out read />
                </DocFooter>
              </DocBubble>
            </Forwardable>
          </Row>

          <Message
            wide tail gap={30} time="10:32 pm"
            quote={
              <Quote>
                <QuoteName>You</QuoteName>
                <QuoteText>
                  <PageIcon viewBox="0 0 32 32" aria-hidden="true">
                    <rect x="2" y="2" width="28" height="28" rx="3" />
                    <path d="M8 10 H24 M8 16 H24 M8 23 H18" />
                  </PageIcon>
                  similarity-Dissertation.docx (1).pdf (51 pages)
                </QuoteText>
              </Quote>
            }
          >
            Thank you
          </Message>

          <Message gap={6} inlineGap={38} time="10:32 pm">For the work</Message>

          <Message out tail gap={29} inlineGap={22} time="10:35 pm" read>Plz share your review</Message>

          <Message wide tail reaction gap={29} time="10:42 pm">
            I am happy with the work done by you. You are highly responsive, supportive, addressing all
            my queries very patiently. Your ability to deliver quality work within the given timeline was
            truly commendable. I will share your profile with all my friends <ThumbsUp />
          </Message>

          <Message wide reaction gap={16} time="10:43 pm">
            Again thank you so much for your support and help.<Smile brows />
          </Message>

          <Message out wide tail gap={30} time="10:44 pm">
            Thankyouu....hope to serve you again<Smile /> <Smile />
          </Message>
        </Thread>
      </Chat>
    </Screen>
  );
}
